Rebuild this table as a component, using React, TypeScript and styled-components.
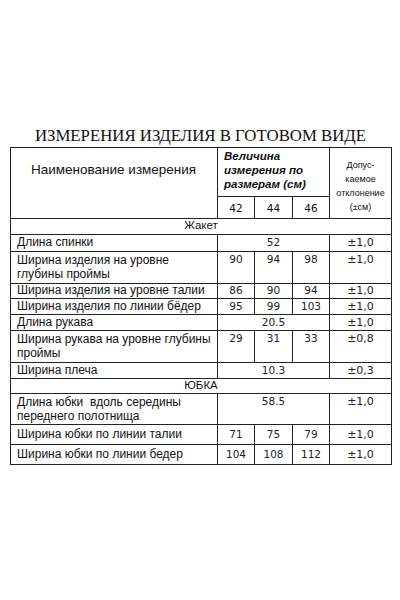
import React from "react";
import styled, { createGlobalStyle } from "styled-components";

const GlobalStyle = createGlobalStyle`
  html, body {
    margin: 0;
    padding: 0;
    background: #fff;
  }
`;

const Page = styled.div`
  width: 400px;
  height: 600px;
  background: #fff;
  padding: 127px 0 0 10px;
  box-sizing: border-box;
`;

const Title = styled.h1`
  width: 381px;
  margin: 0 0 2px;
  text-align: center;
  font-family: "Liberation Serif", "Times New Roman", serif;
  font-weight: 400;
  font-size: 16.8px;
  line-height: 18px;
  color: #111;
`;

const Table = styled.table`
  width: 381px;
  border-collapse: collapse;
  table-layout: fixed;
  color: #111;
  font-family: "Liberation Sans", Arial, sans-serif;
  font-size: 12px;
`;

const Col = styled.col<{ $w: number }>`
  width: ${(p) => p.$w}px;
`;

const Cell = styled.td`
  border: 1px solid #222;
  padding: 0;
`;

const HeadName = styled(Cell)`
  font-size: 13.5px;
  line-height: 16px;
  vertical-align: top;
  padding: 14px 0 0 20px;
  white-space: nowrap;
`;

const HeadSize = styled(Cell)`
  height: 47px;
  vertical-align: top;
  padding: 1px 0 0 6px;
  font-weight: 700;
  font-style: italic;
  font-size: 11.5px;
  line-height: 14px;
`;

const HeadTol = styled(Cell)`
  vertical-align: middle;
  text-align: center;
  font-size: 9px;
  line-height: 14px;
  padding-top: 6px;
`;

const SizeNum = styled(Cell)`
  height: 21px;
  text-align: center;
  font-family: "DejaVu Sans", Verdana, sans-serif;
  font-size: 10.5px;
  line-height: 14px;
  vertical-align: middle;
`;

const Section = styled(Cell)<{ $h: number }>`
  height: ${(p) => p.$h}px;
  text-align: center;
  font-size: 11.5px;
  line-height: 13px;
  vertical-align: top;
`;

const Name = styled(Cell)<{ $h: number; $pad: number; $lh: number }>`
  height: ${(p) => p.$h}px;
  padding: ${(p) => p.$pad}px 0 0 6px;
  line-height: ${(p) => p.$lh}px;
  vertical-align: top;
  white-space: nowrap;
`;

const Num = styled(Cell)<{ $pad: number }>`
  text-align: center;
  vertical-align: top;
  padding-top: ${(p) => p.$pad}px;
  font-family: "DejaVu Sans", Verdana, sans-serif;
  font-size: 10.5px;
  line-height: 13px;
  color: #222;
`;

const Tol = styled(Num)`
  font-size: 11px;
`;

type Row = {
  name: React.ReactNode;
  h: number;
  vals: string[];
  tol: string;
  pad?: number;
  lh?: number;
};

const jacket: Row[] = [
  { name: "Длина спинки", h: 15, vals: ["52"], tol: "±1,0" },
  {
    name: (
      <>
        Ширина изделия на уровне
        <br />
        глубины проймы
      </>
    ),
    h: 30,
    lh: 14,
    vals: ["90", "94", "98"],
    tol: "±1,0",
  },
  { name: "Ширина изделия на уровне талии", h: 14, pad: 0, vals: ["86", "90", "94"], tol: "±1,0" },
  { name: "Ширина изделия по линии бёдер", h: 14, vals: ["95", "99", "103"], tol: "±1,0" },
  { name: "Длина рукава", h: 14, vals: ["20.5"], tol: "±1,0" },
  {
    name: (
      <>
        Ширина рукава на уровне глубины
        <br />
        проймы
      </>
    ),
    h: 30,
    lh: 14,
    vals: ["29", "31", "33"],
    tol: "±0,8",
  },
  { name: "Ширина плеча", h: 14, vals: ["10.3"], tol: "±0,3" },
];

const skirt: Row[] = [
  {
    name: (
      <>
        Длина юбки&nbsp; вдоль середины
        <br />
        переднего полотнища
      </>
    ),
    h: 29,
    lh: 14,
    vals: ["58.5"],
    tol: "±1,0",
  },
  { name: "Ширина юбки по линии талии", h: 16, vals: ["71", "75", "79"], tol: "±1,0", pad: 3 },
  { name: "Ширина юбки по линии бедер", h: 16, vals: ["104", "108", "112"], tol: "±1,0", pad: 3 },
];

const renderRow = (r: Row, i: number) => {
  const pad = r.pad ?? 1;
  return (
    <tr key={i}>
      <Name $h={r.h} $pad={pad} $lh={r.lh ?? 13}>
        {r.name}
      </Name>
      {r.vals.length === 1 ? (
        <Num colSpan={3} $pad={pad}>
          {r.vals[0]}
        </Num>
      ) : (
        r.vals.map((v) => (
          <Num key={v} $pad={pad}>
            {v}
          </Num>
        ))
      )}
      <Tol $pad={pad}>{r.tol}</Tol>
    </tr>
  );
};

export default function App() {
  return (
    <Page>
      <GlobalStyle />
      <Title>ИЗМЕРЕНИЯ ИЗДЕЛИЯ В ГОТОВОМ ВИДЕ</Title>
      <Table>
        <colgroup>
          <Col $w={207} />
          <Col $w={37} />
          <Col $w={38} />
          <Col $w={37} />
          <Col $w={62} />
        </colgroup>
        <tbody>
          <tr>
            <HeadName rowSpan={2}>Наименование измерения</HeadName>
            <HeadSize colSpan={3}>
              Величина
              <br />
              измерения по
              <br />
              размерам (см)
            </HeadSize>
            <HeadTol rowSpan={2}>
              Допус-
              <br />
              каемое
              <br />
              отклонение
              <br />
              (±см)
            </HeadTol>
          </tr>
          <tr>
            <SizeNum>42</SizeNum>
            <SizeNum>44</SizeNum>
            <SizeNum>46</SizeNum>
          </tr>
          <tr>
            <Section colSpan={5} $h={15}>
              Жакет
            </Section>
          </tr>
          {jacket.map(renderRow)}
          <tr>
            <Section colSpan={5} $h={14}>
              ЮБКА
            </Section>
          </tr>
          {skirt.map(renderRow)}
        </tbody>
      </Table>
    </Page>
  );
}
